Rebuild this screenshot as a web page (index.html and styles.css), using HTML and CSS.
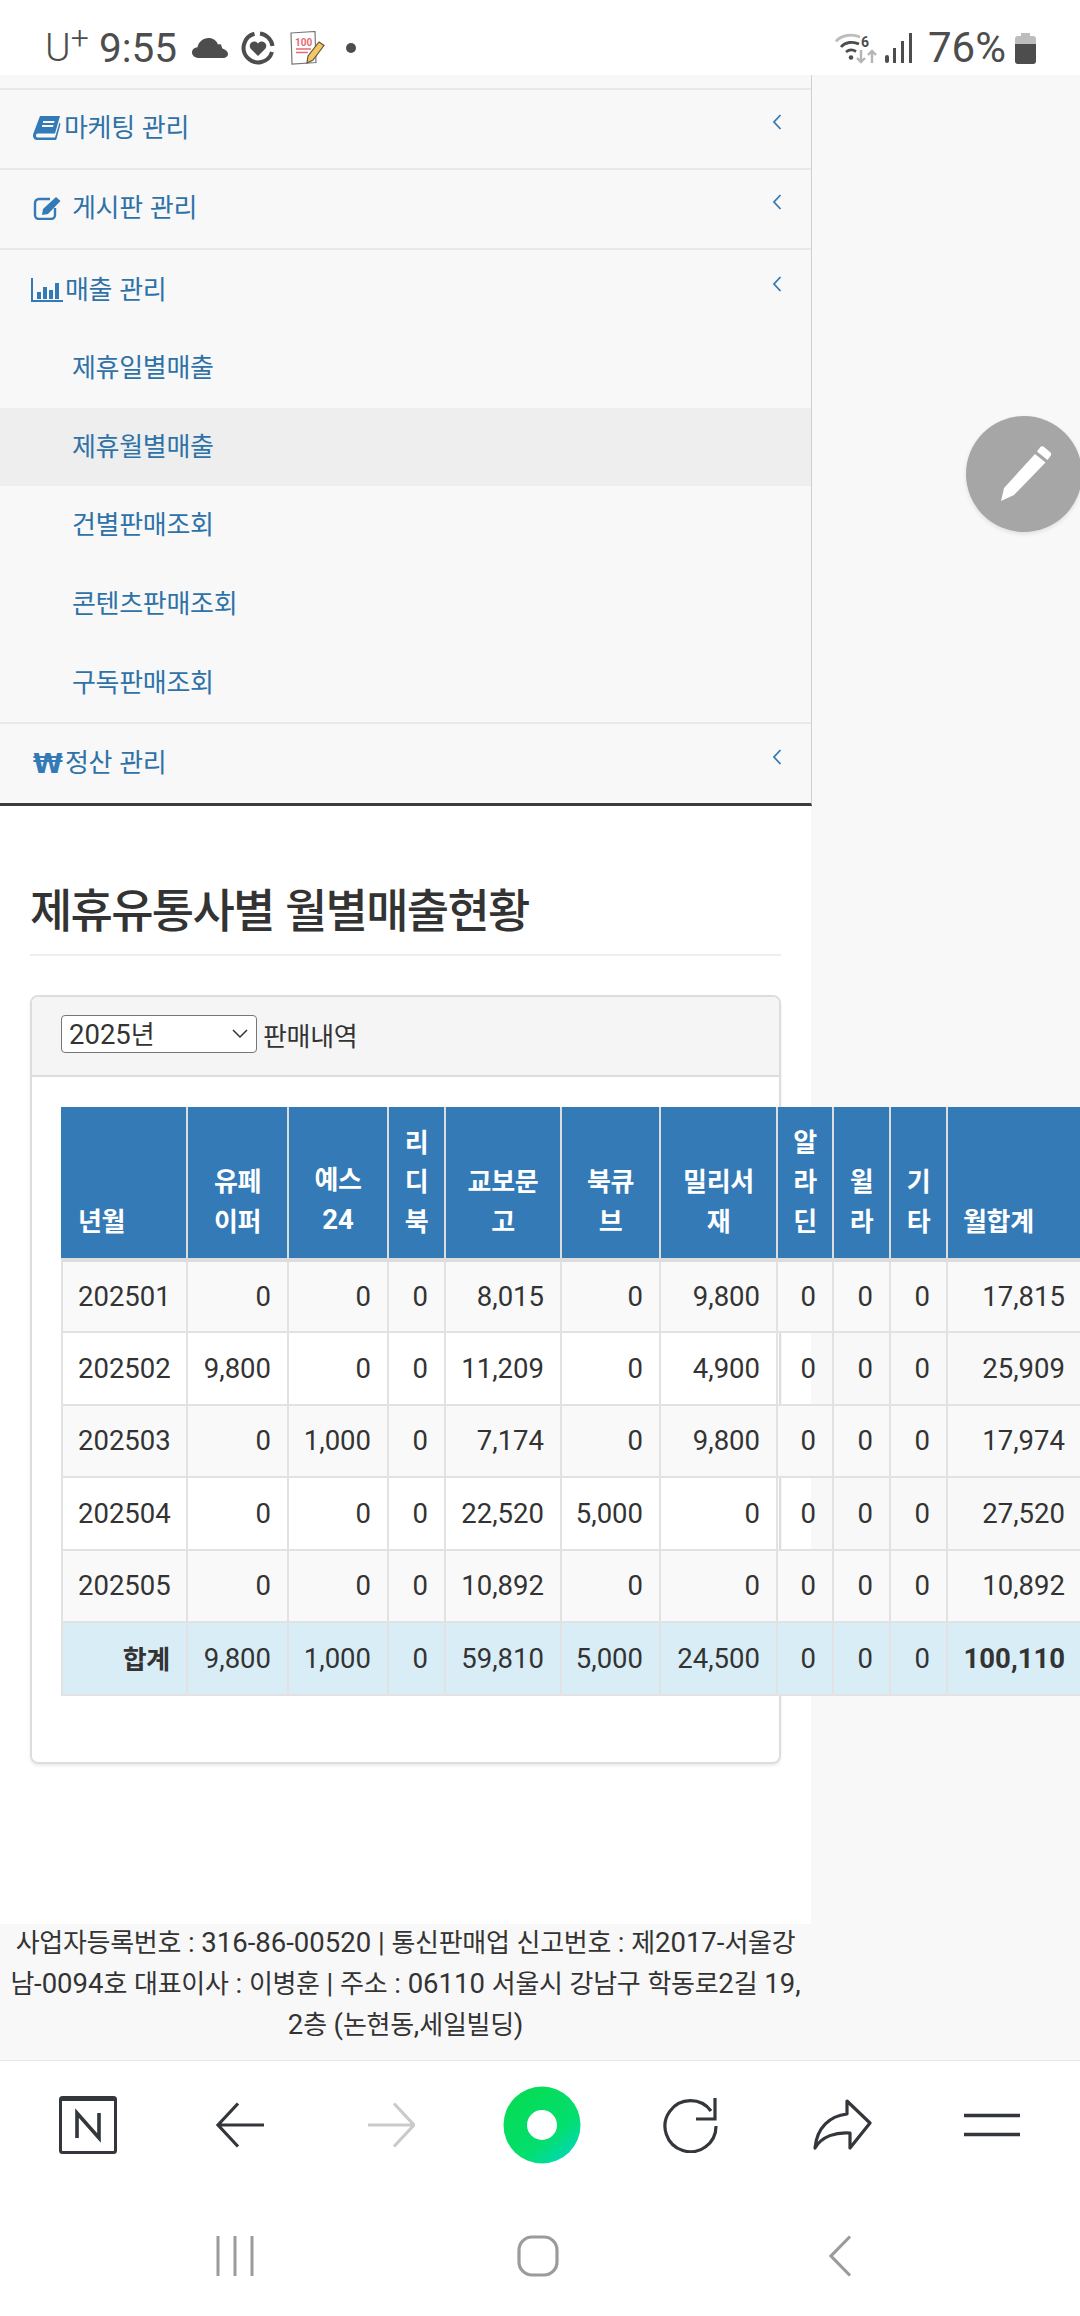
FILE: index.html
```html
<!DOCTYPE html>
<html lang="ko">
<head>
<meta charset="utf-8">
<title>제휴유통사별 월별매출현황</title>
<link rel="stylesheet" href="styles.css">
</head>
<body>
<header class="status">
  <div class="status-left">
    <span class="carrier">U<sup>+</sup></span>
    <span class="clock">9:55</span>
    <svg class="ic-cloud" width="36" height="20" viewBox="0 0 36 20"><path d="M7 20C3 20 0 17.500 0 14.500 0 11.500 2.500 9.300 5.500 9.200 6.500 4 11 0 16.500 0 21 0 24.500 2.500 26 6.500 27 6 28 6 29 6.500 29.800 9 30 10 30.500 10.500 33.500 11.500 36 13.500 36 16 36 18.500 33.500 20 31 20Z" fill="#4d4d4d"/></svg>
    <svg class="ic-ring" width="34" height="34" viewBox="0 0 34 34"><path d="M19 2.500A14.500 14.500 0 0 1 31.500 15M31 21A14.500 14.500 0 1 1 13.500 2.800" fill="none" stroke="#4d4d4d" stroke-width="4"/><path d="M17 25l-7.500-7.500a4.500 4.500 0 0 1 7.500-5 4.500 4.500 0 0 1 7.500 5Z" fill="#4d4d4d"/></svg>
    <svg class="ic-note" width="36" height="34" viewBox="0 0 36 34"><path d="M1 2l24-1.500 1 31-24 1.500Z" fill="#fff" stroke="#777" stroke-width="1.200"/><text x="5" y="15" class="note-text">100</text><path d="M6 18h15M6 21.500h12" stroke="#e56b75" stroke-width="1.500"/><path d="M29 11l5 3.500-11 14.500-6 3 1-7Z" fill="#f2c867" stroke="#66573a" stroke-width="1.200"/></svg>
    <span class="dot"></span>
  </div>
  <div class="status-right">
    <svg class="ic-wifi" width="42" height="32" viewBox="0 0 42 32"><path d="M1 9.500C6 3 17 1.500 25 5" fill="none" stroke="#bdbdbd" stroke-width="2.800"/><path d="M6 15C10 10 18 9 24 12M11 20c3-2.500 7-2.500 10-.5" fill="none" stroke="#4d4d4d" stroke-width="2.800"/><circle cx="16" cy="25.500" r="2.300" fill="#4d4d4d"/><text x="26" y="15" class="wifi-six">6</text><path d="M26 18v12M22 26l4 4 4-4M37 31V19M33 23l4-4 4 4" fill="none" stroke="#b5b5b5" stroke-width="2.400"/></svg>
    <svg class="ic-signal" width="28" height="30" viewBox="0 0 28 30"><rect x="0" y="22" width="4" height="8" rx="2" fill="#4d4d4d"/><rect x="8" y="15" width="3" height="15" fill="#4d4d4d"/><rect x="16" y="8" width="3" height="22" fill="#4d4d4d"/><rect x="24" y="0" width="3" height="30" fill="#4d4d4d"/></svg>
    <span class="percent">76%</span>
    <svg class="ic-batt" width="21" height="31" viewBox="0 0 21 31"><path d="M6 0h9v3h3a3 3 0 0 1 3 3v5H0V6a3 3 0 0 1 3-3h3Z" fill="#bdbdbd"/><path d="M0 11h21v17a3 3 0 0 1-3 3H3a3 3 0 0 1-3-3Z" fill="#4d4d4d"/></svg>
  </div>
</header>

<nav class="sidebar">
  <div class="sliver"></div>
  <a class="nav-row sep">
    <svg class="nav-icon book" width="28" height="24" viewBox="0 0 28 24"><path d="M7 0h20l-5 17.500H4.500c-2 0-2 4 0 4H22l4.500-15 1 1.500-4 15c-.3 1-1 1-2 1H4C1 24-.8 21 .2 18ZM10 5v2h11l.6-2ZM9 9v2h11l.6-2Z" fill="#337ab7" fill-rule="evenodd"/></svg>
    <span class="ko first">마케팅 관리</span>
    <svg class="chev" width="10" height="16" viewBox="0 0 10 16"><path d="M8.500 1L2 8l6.500 7" fill="none" stroke="#337ab7" stroke-width="1.800"/></svg>
  </a>
  <a class="nav-row sep">
    <svg class="nav-icon edit" width="30" height="24" viewBox="0 0 30 24"><path d="M17 3H6a4 4 0 0 0-4 4v12a4 4 0 0 0 4 4h12a4 4 0 0 0 4-4v-7" fill="none" stroke="#337ab7" stroke-width="2.400"/><path d="M10 13L23 1l4.500 4L15 18l-6 1Z" fill="#337ab7"/></svg>
    <span class="ko second">게시판 관리</span>
    <svg class="chev" width="10" height="16" viewBox="0 0 10 16"><path d="M8.500 1L2 8l6.500 7" fill="none" stroke="#337ab7" stroke-width="1.800"/></svg>
  </a>
  <a class="nav-row open">
    <svg class="nav-icon chart" width="32" height="24" viewBox="0 0 32 24"><path d="M1 0v23h31" fill="none" stroke="#337ab7" stroke-width="2"/><path d="M6 14h4v7H6ZM12 9h4v12h-4ZM18 12h4v9h-4ZM24 5h4v16h-4Z" fill="#337ab7"/></svg>
    <span class="ko third">매출 관리</span>
    <svg class="chev" width="10" height="16" viewBox="0 0 10 16"><path d="M8.500 1L2 8l6.500 7" fill="none" stroke="#337ab7" stroke-width="1.800"/></svg>
  </a>
  <a class="sub-row"><span class="ko">제휴일별매출</span></a>
  <a class="sub-row active"><span class="ko">제휴월별매출</span></a>
  <a class="sub-row"><span class="ko">건별판매조회</span></a>
  <a class="sub-row"><span class="ko">콘텐츠판매조회</span></a>
  <a class="sub-row"><span class="ko">구독판매조회</span></a>
  <a class="nav-row last">
    <span class="won">₩</span>
    <span class="ko third">정산 관리</span>
    <svg class="chev" width="10" height="16" viewBox="0 0 10 16"><path d="M8.500 1L2 8l6.500 7" fill="none" stroke="#337ab7" stroke-width="1.800"/></svg>
  </a>
</nav>

<main class="main">
  <h1 class="page-title">제휴유통사별 월별매출현황</h1>
  <section class="panel">
    <div class="panel-heading">
      <div class="select-box"><span class="select-value">2025<span class="ko">년</span></span>
        <svg width="16" height="10" viewBox="0 0 16 10"><path d="M1 1l7 7 7-7" fill="none" stroke="#333" stroke-width="1.500"/></svg>
      </div>
      <span class="ko heading-label">판매내역</span>
    </div>
    <div class="panel-body">
      <table class="sales">
        <colgroup><col class="c1"><col class="c2"><col class="c3"><col class="c4"><col class="c5"><col class="c6"><col class="c7"><col class="c8"><col class="c9"><col class="c10"><col class="c11"></colgroup>
        <thead>
          <tr>
            <th class="left">년월</th><th>유페<br>이퍼</th><th>예스<br><span class="num">24</span></th><th>리<br>디<br>북</th><th>교보문<br>고</th><th>북큐<br>브</th><th>밀리서<br>재</th><th>알<br>라<br>딘</th><th>윌<br>라</th><th>기<br>타</th><th class="left">월합계</th>
          </tr>
        </thead>
        <tbody>
          <tr><td class="ym">202501</td><td>0</td><td>0</td><td>0</td><td>8,015</td><td>0</td><td>9,800</td><td>0</td><td>0</td><td>0</td><td class="month-sum">17,815</td></tr>
          <tr><td class="ym">202502</td><td>9,800</td><td>0</td><td>0</td><td>11,209</td><td>0</td><td>4,900</td><td>0</td><td>0</td><td>0</td><td class="month-sum">25,909</td></tr>
          <tr><td class="ym">202503</td><td>0</td><td>1,000</td><td>0</td><td>7,174</td><td>0</td><td>9,800</td><td>0</td><td>0</td><td>0</td><td class="month-sum">17,974</td></tr>
          <tr><td class="ym">202504</td><td>0</td><td>0</td><td>0</td><td>22,520</td><td>5,000</td><td>0</td><td>0</td><td>0</td><td>0</td><td class="month-sum">27,520</td></tr>
          <tr><td class="ym">202505</td><td>0</td><td>0</td><td>0</td><td>10,892</td><td>0</td><td>0</td><td>0</td><td>0</td><td>0</td><td class="month-sum">10,892</td></tr>
          <tr class="total"><td class="total-label"><span class="ko">합계</span></td><td>9,800</td><td>1,000</td><td>0</td><td>59,810</td><td>5,000</td><td>24,500</td><td>0</td><td>0</td><td>0</td><td class="month-sum grand">100,110</td></tr>
        </tbody>
      </table>
    </div>
  </section>
</main>

<footer class="company">
  <p><span class="ko">사업자등록번호</span> : 316-86-00520 | <span class="ko">통신판매업 신고번호</span> : <span class="ko">제</span>2017-<span class="ko">서울강</span><br>
  <span class="ko">남</span>-0094<span class="ko">호 대표이사</span> : <span class="ko">이병훈</span> | <span class="ko">주소</span> : 06110 <span class="ko">서울시 강남구 학동로</span>2<span class="ko">길</span> 19,<br>
  2<span class="ko">층</span> (<span class="ko">논현동</span>,<span class="ko">세일빌딩</span>)</p>
</footer>

<div class="toolbar">
  <span class="tool"><svg width="58" height="58" viewBox="0 0 58 58"><rect x="1.500" y="1.500" width="55" height="55" rx="2" fill="none" stroke="#33363b" stroke-width="3"/><path d="M1.500 3h55" stroke="#33363b" stroke-width="4"/><path d="M18 42V17l22 25V17" fill="none" stroke="#33363b" stroke-width="3.600"/></svg></span>
  <span class="tool"><svg width="50" height="46" viewBox="0 0 50 46"><path d="M50 23H5M24 1.500L4 23l20 21.500" fill="none" stroke="#33363b" stroke-width="3.200"/></svg></span>
  <span class="tool"><svg width="50" height="46" viewBox="0 0 50 46"><path d="M3 23h45M29 1.500L49 23 29 44.500" fill="none" stroke="#c9cacb" stroke-width="3.200"/></svg></span>
  <span class="tool tool-green"><svg width="78" height="78" viewBox="0 0 78 78"><defs><linearGradient id="naver" x1="0.200" y1="0.100" x2="0.900" y2="1"><stop offset="0" stop-color="#05dc55"/><stop offset="0.600" stop-color="#03de6e"/><stop offset="1" stop-color="#02d8c4"/></linearGradient></defs><circle cx="39" cy="39" r="38.500" fill="url(#naver)"/><circle cx="39" cy="39" r="15" fill="#fff"/></svg></span>
  <span class="tool"><svg width="56" height="56" viewBox="0 0 56 56"><path d="M48 14A25.500 25.500 0 1 0 53 29" fill="none" stroke="#33363b" stroke-width="3.200"/><path d="M52 5v21H33" fill="none" stroke="#33363b" stroke-width="3.200" transform="translate(0 -4)"/></svg></span>
  <span class="tool"><svg width="60" height="52" viewBox="0 0 60 52"><path d="M35 2L58 24 38 49V34C24 33 10 37 3 49 5 28 18 17 35 15Z" fill="none" stroke="#33363b" stroke-width="3.200" stroke-linejoin="round"/></svg></span>
  <span class="tool"><svg width="58" height="24" viewBox="0 0 58 24"><path d="M1 2.500h56M1 21.500h56" stroke="#33363b" stroke-width="3.600"/></svg></span>
</div>

<div class="navbar">
  <span class="nav-btn"><svg width="38" height="42" viewBox="0 0 38 42"><path d="M2 1v40M19 1v40M36 1v40" stroke="#9b9b9b" stroke-width="3"/></svg></span>
  <span class="nav-btn"><svg width="42" height="42" viewBox="0 0 42 42"><rect x="2" y="2" width="38" height="38" rx="13" fill="none" stroke="#9b9b9b" stroke-width="3.200"/></svg></span>
  <span class="nav-btn"><svg width="24" height="42" viewBox="0 0 24 42"><path d="M22 1.500L3 21l19 19.500" fill="none" stroke="#9b9b9b" stroke-width="3.200"/></svg></span>
</div>

<button class="fab" aria-label="글쓰기"><svg width="60" height="60" viewBox="0 0 60 60"><path d="M46 3.500a3 3 0 0 1 4-.5l6 5a3 3 0 0 1 .5 4l-3 4-10.500-8.500ZM41 10l10.500 8.500L20 51 7 57 10 44Z" fill="#fff"/></svg></button>
</body>
</html>
```
FILE: styles.css
```css
* { box-sizing: border-box; }
html, body { margin: 0; padding: 0; }
body {
  position: relative;
  width: 1080px;
  height: 2316px;
  overflow: hidden;
  background: #f8f8f8;
  color: #333;
  font-family: Roboto, "Noto Sans CJK KR", sans-serif;
  font-size: 27.500px;
  display: flex;
  flex-direction: column;
}
.ko {
  font-family: "Noto Sans CJK KR", Roboto, sans-serif;
  font-size: 26px;
  letter-spacing: -0.300px;
}

/* status bar */
.status {
  height: 75px;
  background: #fff;
  display: flex;
  justify-content: space-between;
  align-items: center;
  padding: 21px 44px 0 45px;
  color: #4d4d4d;
  flex: none;
}
.status-left, .status-right { display: flex; align-items: center; }
.carrier { font-size: 39px; font-weight: 300; width: 54px; line-height: 44px; }
.carrier sup { font-size: 32px; line-height: 0; vertical-align: 12px; margin-left: 0; }
.clock { font-size: 40.500px; font-weight: 400; width: 93px; line-height: 44px; }
.ic-ring { margin-left: 13px; }
.ic-note { margin-left: 15px; }
.dot { width: 10px; height: 10px; border-radius: 50%; background: #4d4d4d; margin-left: 20px; }
.percent { font-size: 42px; margin-left: 15px; line-height: 44px; width: 87px; }
.ic-signal { margin-left: 8px; }
.note-text { font: 700 10px Roboto, sans-serif; fill: #e56b75; }
.wifi-six { font: 700 14px Roboto, sans-serif; fill: #4d4d4d; }

/* sidebar */
.sidebar {
  width: 812px;
  flex: none;
  background: #f8f8f8;
  border-right: 1px solid #d0d0d0;
  border-bottom: 3px solid #3c3c3c;
  color: #2e72a8;
}
.sliver { height: 15px; border-bottom: 2px solid #e9e9e9; }
.nav-row {
  height: 80px;
  display: flex;
  align-items: center;
  padding: 0 29px 2px 33px;
}
.nav-row .ko, .sub-row .ko { margin-bottom: 5px; }
.nav-row.sep { border-bottom: 2px solid #e9e9e9; }
.nav-row.open { height: 79px; padding-bottom: 0; }
.nav-row.last { border-top: 2px solid #e9e9e9; padding-bottom: 0; height: 81px; }
.nav-icon { flex: none; }
.chart { margin-left: -2px; }
.first { margin-left: 3px; }
.second { margin-left: 9px; }
.third { margin-left: 2px; }
.chev { margin-left: auto; margin-top: -12px; }
.won { font: 700 27px "DejaVu Sans", sans-serif; width: 30px; color: #337ab7; }
.sub-row {
  height: 78.600px;
  display: flex;
  align-items: center;
  padding-left: 72px;
}
.sub-row.active { background: #eee; }

/* main */
.main {
  width: 811px;
  height: 1118px;
  flex: none;
  background: #fff;
  padding: 0 30px;
}
.page-title {
  margin: 76px 0 0;
  height: 74px;
  line-height: 50px;
  border-bottom: 2px solid #eee;
  font-family: "Noto Sans CJK KR", Roboto, sans-serif;
  font-size: 46px;
  font-weight: 500;
  letter-spacing: -1.700px;
  color: #333;
}
.panel {
  margin-top: 39px;
  width: 751px;
  height: 769px;
  border: 2px solid #ddd;
  border-radius: 8px;
  box-shadow: 0 2px 3px rgba(0, 0, 0, .08);
}
.panel-heading {
  height: 80px;
  background: #f5f5f5;
  border-bottom: 2px solid #ddd;
  border-radius: 6px 6px 0 0;
  display: flex;
  align-items: center;
  padding-left: 29px;
  padding-bottom: 3px;
}
.select-box {
  width: 196px;
  height: 38px;
  border: 1.500px solid #767676;
  border-radius: 4px;
  background: #fff;
  display: flex;
  align-items: center;
  justify-content: space-between;
  padding: 0 8px 0 7px;
}
.select-value { font-size: 27.500px; line-height: 34px; }
.heading-label { margin-left: 6px; }
.panel-body { padding: 30px 0 0 29px; }

/* table */
.sales {
  width: 1019px;
  border-collapse: collapse;
  table-layout: fixed;
}
.c1 { width: 125px; }
.c2 { width: 101px; }
.c3 { width: 100px; }
.c4 { width: 57px; }
.c5 { width: 116px; }
.c6 { width: 99px; }
.c7 { width: 117px; }
.c8 { width: 56px; }
.c9 { width: 57px; }
.c10 { width: 57px; }
.c11 { width: 134px; }
.sales th {
  height: 152px;
  background: #337ab7;
  color: #fff;
  border: 2px solid #ddd;
  border-top-color: #337ab7;
  border-bottom: 4px solid #ddd;
  padding: 0 4px 18px;
  vertical-align: bottom;
  text-align: center;
  font-family: "Noto Sans CJK KR", Roboto, sans-serif;
  font-size: 26px;
  font-weight: 700;
  letter-spacing: -0.300px;
  line-height: 39.800px;
}
.sales th.left { text-align: left; padding-left: 15px; }
.sales th:first-child { border-left-color: #337ab7; }
.num { font-family: Roboto, sans-serif; font-size: 27.500px; letter-spacing: 0; }
.sales td {
  height: 72.500px;
  border: 2px solid #e2e2e2;
  padding: 0 16px 0 0;
  text-align: right;
  font-size: 27.500px;
  line-height: 38px;
  white-space: nowrap;
  color: #333;
}
.sales tbody tr:nth-child(odd) td { background: #f9f9f9; }
.sales td.ym { text-align: left; padding-left: 15px; }
.sales td.month-sum { padding-right: 15px; }
.sales tr.total td { background: #d9edf7; }
.total-label .ko { font-weight: 700; }
.grand { font-weight: 700; }

/* footer */
.company {
  width: 811px;
  height: 136px;
  flex: none;
  text-align: center;
  font-size: 27.500px;
  color: #333;
}
.company p { margin: -3px 0 0; line-height: 39px; white-space: nowrap; }

/* browser toolbar */
.toolbar {
  height: 130px;
  flex: none;
  width: 1080px;
  background: #fff;
  border-top: 1px solid #e8e8e8;
  display: grid;
  grid-template-columns: repeat(7, 150.700px);
  padding-left: 13px;
  align-items: center;
}
.tool { display: flex; justify-content: center; align-items: center; }
.tool-green { padding-left: 3px; }

/* system nav */
.navbar {
  flex: 1;
  background: #fff;
  display: grid;
  grid-template-columns: repeat(3, 302.500px);
  padding: 6px 0 0 84px;
  align-items: center;
}
.nav-btn { display: flex; justify-content: center; }

/* floating button */
.fab {
  position: absolute;
  left: 966px;
  top: 416px;
  width: 116px;
  height: 116px;
  border: 0;
  border-radius: 50%;
  background: #a6a6a6;
  box-shadow: 0 2px 4px rgba(0, 0, 0, .1);
  padding: 0;
  display: flex;
  align-items: center;
  justify-content: center;
}
```
